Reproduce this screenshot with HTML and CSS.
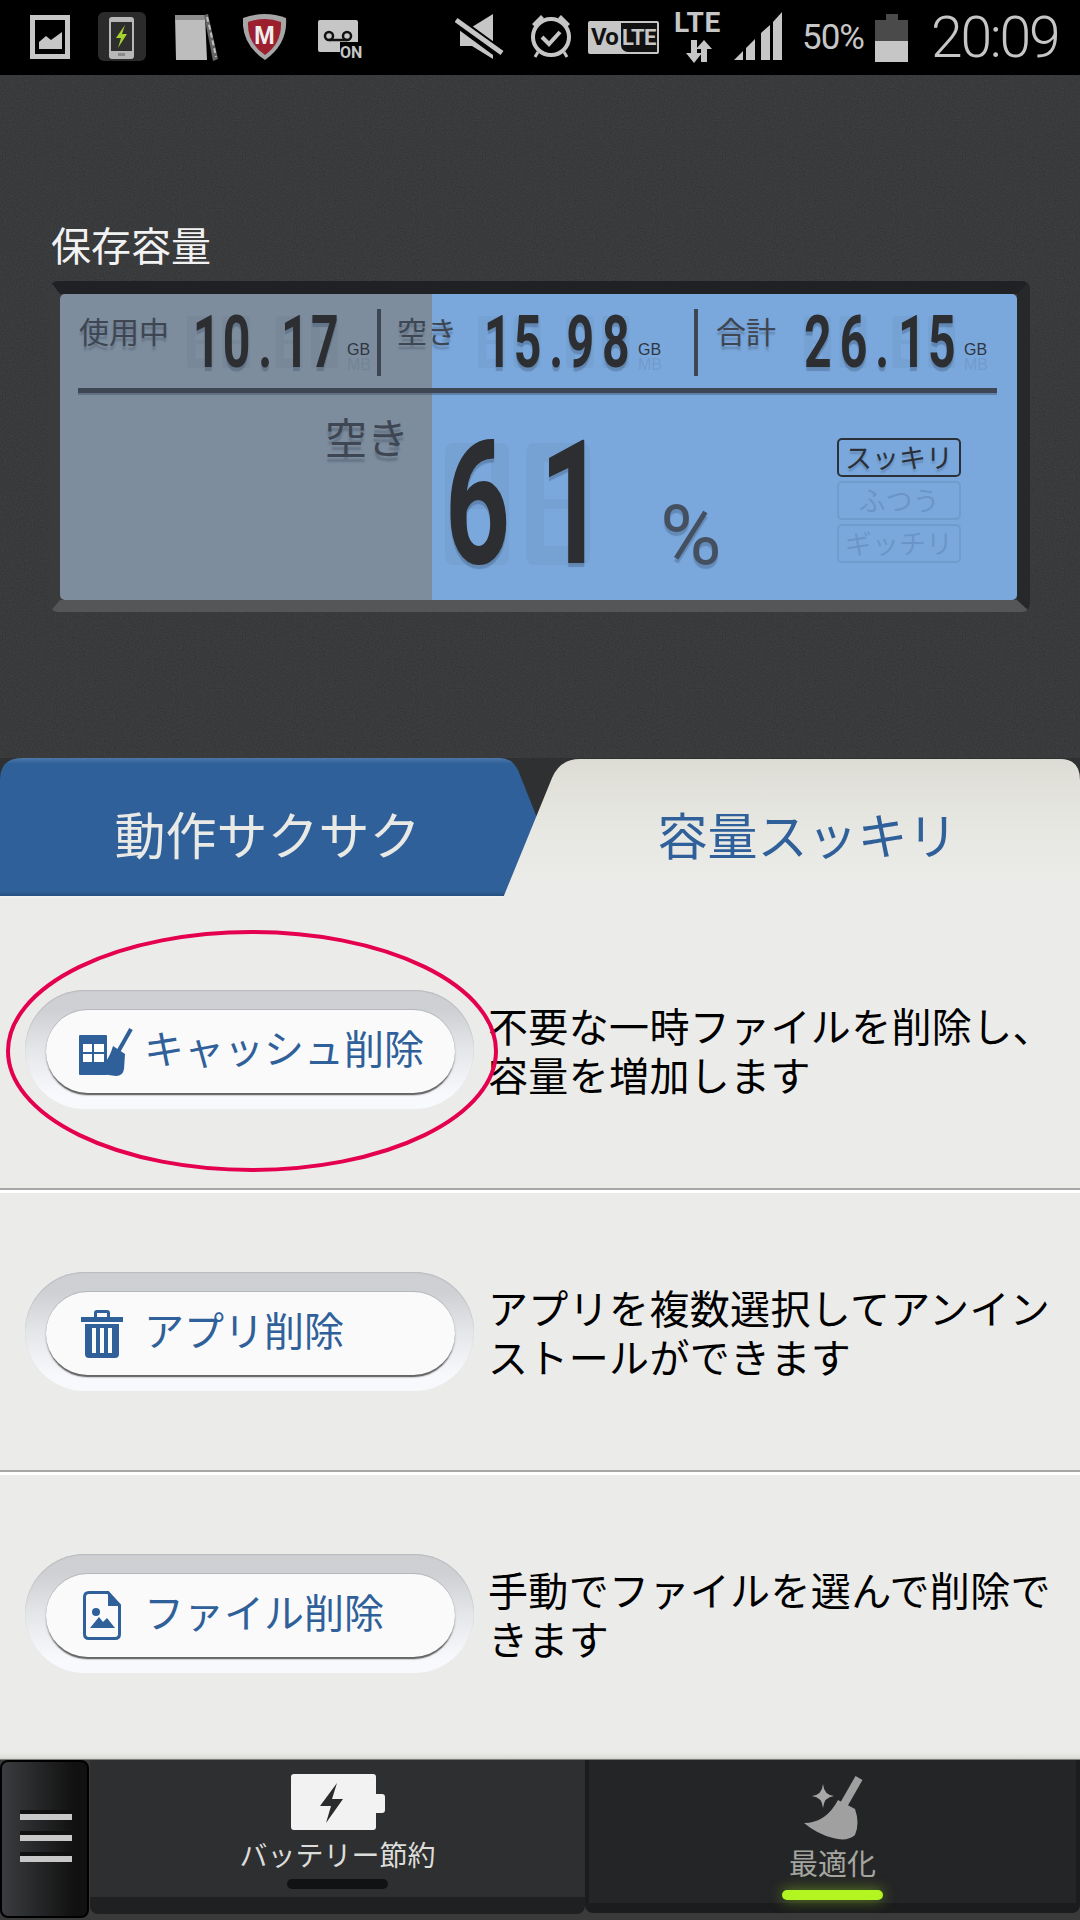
FILE: index.html
```html
<!DOCTYPE html>
<html lang="ja">
<head>
  <meta charset="UTF-8">
  <meta name="viewport" content="width=device-width, initial-scale=1.0">
  <title>容量スッキリ</title>
  <link rel="stylesheet" href="styles.css">
</head>
<body>
  <div class="status">
    <div class="status-left">
      <svg width="68" height="75" viewBox="0 0 68 75"><rect x="2.500" y="17.500" width="35" height="39" fill="none" stroke="#c6c6c6" stroke-width="5"/><path d="M9 49v-7l7-6 5 4 11-8v17z" fill="#c6c6c6"/></svg>
      <svg width="76" height="75" viewBox="0 0 76 75"><rect width="48" height="49" y="12" rx="6" fill="#2b2b2b"/><rect x="11" y="17" width="25" height="42" rx="3" fill="#b8b8b8"/><rect x="13" y="22" width="21" height="29" fill="#2e2e2e"/><path d="M27 25l-9 13h5l-3 10 9-14h-5z" fill="#a5d22c"/><rect x="20" y="53" width="7" height="3" fill="#8a8a8a"/></svg>
      <svg width="69" height="75" viewBox="0 0 69 75"><path d="M1 15h30l2 45H2z" fill="#bdbdbd"/><path d="M1 15h30v5H1z" fill="#8e8e8e"/><path d="M30 15l4-1 10 45-5 2z" fill="#666"/><path d="M33 17l3 12 3 14 3 14" stroke="#c0c0c0" stroke-width="2" fill="none" stroke-dasharray="5 3"/></svg>
      <svg width="74" height="75" viewBox="0 0 74 75"><path d="M0 18q22-8 43 0q2 26-21 42Q-2 44 0 18z" fill="#a6a6a6"/><path d="M5 22q17-6 33 0q1 21-16 33Q4 43 5 22z" fill="#9c1f2e"/><text x="21.500" y="44" class="shield-letter">M</text></svg>
      <svg width="60" height="75" viewBox="0 0 60 75"><path d="M3 20h36q2 0 2 2v20H23v10H3q-2 0-2-2V22q0-2 2-2z" fill="#c6c6c6"/><circle cx="12" cy="36" r="4" fill="none" stroke="#111" stroke-width="2.500"/><circle cx="30" cy="36" r="4" fill="none" stroke="#111" stroke-width="2.500"/><path d="M12 40h18" stroke="#111" stroke-width="2.500"/><text x="23" y="58" class="vm-on">ON</text></svg>
    </div>
    <svg width="74" height="75" viewBox="0 0 74 75"><path d="M5 27h12L38 14v45L17 46H5z" fill="#c6c6c6"/><path d="M1 21l45 33" stroke="#000" stroke-width="11"/><path d="M1 20l46 33" stroke="#c6c6c6" stroke-width="5"/></svg>
    <svg width="59" height="75" viewBox="0 0 59 75"><circle cx="22" cy="37" r="18" fill="none" stroke="#c6c6c6" stroke-width="4"/><path d="M13 37l7 7 11-12" fill="none" stroke="#c6c6c6" stroke-width="4"/><path d="M3 24l9-9 3 3-9 9zM41 24l-9-9-3 3 9 9z" fill="#c6c6c6"/><path d="M9 52l-3 5M35 52l3 5" stroke="#c6c6c6" stroke-width="3"/></svg>
    <div class="volte-slot"><div class="volte"><span class="volte-vo">Vo</span><span class="volte-lte">LTE</span></div></div>
    <div class="lte">
      <span class="lte-text">LTE</span>
      <svg width="26" height="24" viewBox="0 0 26 24"><path d="M0 13h5V0h6v13h5l-8 10zM10 9l8-9 8 9h-5v13h-6V9z" fill="#c6c6c6"/></svg>
    </div>
    <svg width="68" height="75" viewBox="0 0 68 75"><path d="M0 60l9-9v9zM12 48l9-9v21h-9zM27 33l9-8v35h-9zM39 22l9-10v48h-9z" fill="#c6c6c6"/></svg>
    <div class="battery-text">50%</div>
    <div class="battery-slot"><div class="battery-cap"></div><div class="battery-body"></div></div>
    <div class="clock">20:09</div>
  </div>

  <div class="panel">
    <div class="panel-title">保存容量</div>
    <div class="lcd-frame">
      <div class="lcd">
        <div class="stats">
          <div class="stat stat-used">
            <span class="stat-label">使用中</span>
            <span class="num"><span class="d one">1</span><span class="d">0</span><span class="dot">.</span><span class="d one">1</span><span class="d">7</span></span>
            <span class="unit"><b>GB</b><i>MB</i></span>
          </div>
          <div class="divider"></div>
          <div class="stat stat-free">
            <span class="stat-label">空き</span>
            <span class="num"><span class="d one">1</span><span class="d">5</span><span class="dot">.</span><span class="d">9</span><span class="d">8</span></span>
            <span class="unit"><b>GB</b><i>MB</i></span>
          </div>
          <div class="divider"></div>
          <div class="stat stat-total">
            <span class="stat-label">合計</span>
            <span class="num"><span class="d">2</span><span class="d">6</span><span class="dot">.</span><span class="d one">1</span><span class="d">5</span></span>
            <span class="unit"><b>GB</b><i>MB</i></span>
          </div>
        </div>
        <div class="lcd-line"></div>
        <div class="lcd-main">
          <div class="free-label">空き</div>
          <div class="big-num"><span class="d">6</span><span class="d one">1</span></div>
          <div class="percent">%</div>
          <div class="modes">
            <div class="mode mode-on">スッキリ</div>
            <div class="mode">ふつう</div>
            <div class="mode">ギッチリ</div>
          </div>
        </div>
      </div>
    </div>
  </div>

  <div class="tabs">
    <div class="tab tab-speed">動作サクサク</div>
    <div class="tab tab-clean">容量スッキリ</div>
  </div>

  <div class="list">
    <div class="row">
      <div class="pill">
        <div class="pill-inner">
          <span class="pill-icon icon-cache">
            <svg width="54" height="50" viewBox="0 0 54 50"><rect x="0" y="8" width="28" height="40" rx="1" fill="#2f6099"/><path d="M4 17h9v8H4zM15 17h10v8H15zM4 27h9v8H4zM15 27h10v8H15z" fill="#fff"/><path d="M52 2L39 25" stroke="#2f6099" stroke-width="4"/><path d="M34 19l12 8-1 15q-1 7-8 7l-15-2-8-4q14-3 20-24z" fill="#2f6099"/></svg>
          </span>
          <span class="pill-label">キャッシュ削除</span>
        </div>
      </div>
      <p class="desc">不要な一時ファイルを削除し、<br>容量を増加します</p>
    </div>
    <div class="row">
      <div class="pill">
        <div class="pill-inner">
          <span class="pill-icon">
            <svg width="42" height="48" viewBox="0 0 42 48"><path d="M0 7h13V3q0-3 3-3h10q3 0 3 3v4h13v5H0zM16 7h10V3H16z" fill="#2f6099" fill-rule="evenodd"/><path d="M4 14h34v30q0 4-4 4H8q-4 0-4-4z" fill="#2f6099"/><path d="M11 18h4v25h-4zM19 18h4v25h-4zM27 18h4v25h-4z" fill="#fafafa"/></svg>
          </span>
          <span class="pill-label">アプリ削除</span>
        </div>
      </div>
      <p class="desc">アプリを複数選択してアンイン<br>ストールができます</p>
    </div>
    <div class="row row-last">
      <div class="pill">
        <div class="pill-inner">
          <span class="pill-icon">
            <svg width="38" height="49" viewBox="0 0 38 49"><path d="M6 1.500h19L36.500 14v29q0 4.500-4.500 4.500H6q-4.500 0-4.500-4.500V6Q1.500 1.500 6 1.500z" fill="none" stroke="#2f6099" stroke-width="3"/><path d="M25 2v13h11z" fill="#2f6099"/><circle cx="13" cy="21" r="4" fill="#2f6099"/><path d="M7 37l9-11 4 5 4-4 8 10z" fill="#2f6099"/></svg>
          </span>
          <span class="pill-label">ファイル削除</span>
        </div>
      </div>
      <p class="desc">手動でファイルを選んで削除で<br>きます</p>
    </div>
    <svg class="circle-mark" width="494" height="244" viewBox="0 0 494 244"><ellipse cx="247" cy="122" rx="244" ry="119" fill="none" stroke="#e4004f" stroke-width="4"/></svg>
  </div>
  <div class="strip"></div>

  <div class="footer">
    <div class="menu">
      <span class="menu-bar"></span>
      <span class="menu-bar"></span>
      <span class="menu-bar"></span>
    </div>
    <div class="nav nav-battery">
      <svg width="96" height="58" viewBox="0 0 96 58"><path d="M4 1h79q3 0 3 3v17h6q3 0 3 3v13q0 3-3 3h-6v14q0 3-3 3H4q-3 0-3-3V4q0-3 3-3z" fill="#f2f2f2"/><path d="M47 10L30 33h11l-5 17 17-24H42z" fill="#2a2b2d"/></svg>
      <div class="nav-label">バッテリー節約</div>
      <div class="nav-mark"></div>
    </div>
    <div class="nav nav-clean">
      <svg width="60" height="66" viewBox="0 0 60 66"><path d="M20 9q1 11 11 12-10 1-11 12-1-11-11-12 10-1 11-12z" fill="#a8a8a8"/><path d="M56 3L40 31" stroke="#a0a0a0" stroke-width="8"/><path d="M35 25l17 9q5 14 0 26-8 7-22 3-16-4-29-15 22 0 34-23z" fill="#a0a0a0"/></svg>
      <div class="nav-label">最適化</div>
      <div class="nav-mark"></div>
    </div>
  </div>
</body>
</html>
```

FILE: styles.css
```css
* {
  box-sizing: border-box;
}

body {
  margin: 0;
  width: 1080px;
  height: 1920px;
  overflow: hidden;
  font-family: "Noto Sans CJK JP", sans-serif;
  background-color: #ebebe9;
}

/* status bar */
.status {
  display: flex;
  align-items: center;
  height: 75px;
  padding-left: 30px;
  background-color: #000;
  color: #c6c6c6;
}

.status svg {
  display: block;
  flex: none;
}

.status-left {
  display: flex;
  margin-right: 78px;
}

.shield-letter {
  font: 700 25px "Liberation Sans", sans-serif;
  fill: #eee;
  text-anchor: middle;
}

.vm-on {
  font: 700 16px Roboto, sans-serif;
  fill: #c6c6c6;
}

.volte-slot {
  width: 86px;
}

.volte {
  display: flex;
  width: 71px;
  height: 33px;
  border: 2px solid #c6c6c6;
  border-radius: 2px;
  background-color: #c6c6c6;
  font: 700 24px/29px Roboto, sans-serif;
}

.volte-vo {
  width: 31px;
  padding-left: 1px;
  color: #111;
  letter-spacing: -1px;
}

.volte-lte {
  flex: 1;
  background-color: #111;
  border-radius: 0 0 0 7px;
  color: #c6c6c6;
  font-size: 22px;
  text-align: center;
  letter-spacing: -.5px;
}

.lte {
  display: flex;
  flex-direction: column;
  width: 60px;
}

.lte-text {
  font: 700 28px/24px Roboto, sans-serif;
  letter-spacing: .5px;
  margin-bottom: 5px;
}

.lte svg {
  margin-left: 12px;
}

.battery-text {
  width: 73px;
  font: 400 35px/75px Roboto, sans-serif;
  letter-spacing: -1px;
}

.battery-slot {
  width: 56px;
}

.battery-cap {
  width: 12px;
  height: 6px;
  margin-left: 11px;
  background-color: #4a4a4a;
}

.battery-body {
  width: 33px;
  height: 42px;
  background: linear-gradient(#4a4a4a 0 21px, #c6c6c6 21px);
}

.clock {
  font: 300 57px/75px Roboto, sans-serif;
  letter-spacing: -2.2px;
}

/* storage panel */
.panel {
  height: 683px;
  padding-top: 149px;
  background-color: #2f3032;
  background-image: url("data:image/svg+xml,%3Csvg xmlns='http://www.w3.org/2000/svg' width='240' height='240'%3E%3Cfilter id='n'%3E%3CfeTurbulence type='fractalNoise' baseFrequency='.9' numOctaves='2'/%3E%3CfeColorMatrix values='0 0 0 0 1 0 0 0 0 1 0 0 0 0 1 0 0 0 .1 0'/%3E%3C/filter%3E%3Crect width='240' height='240' filter='url(%23n)'/%3E%3C/svg%3E");
}

.panel-title {
  margin: 0 0 17px 51px;
  font-size: 40px;
  line-height: 40px;
  color: #f2f2f2;
}

.lcd-frame {
  width: 980px;
  height: 331px;
  margin-left: 50px;
  border-style: solid;
  border-width: 13px 13px 12px 10px;
  border-color: #202124 #27282a #555657 #3a3b3d;
  border-radius: 8px;
}

.lcd {
  position: relative;
  z-index: 0;
  height: 306px;
  border-radius: 5px;
  background: linear-gradient(to right, #7d8d9e 0 372px, #7aa8dc 372px);
  color: #3e4653;
}

.stats {
  display: flex;
  height: 94px;
  padding: 15px 0 0 19px;
}

.stat {
  display: flex;
}

.stat-label {
  flex: none;
  padding-top: 5px;
  font-size: 30px;
  line-height: 32px;
  text-shadow: 0 4px 2px rgba(50, 60, 75, .3);
}

.stat-used {
  width: 298px;
}

.stat-used .stat-label {
  width: 108px;
}

.stat-free {
  width: 313px;
  padding-left: 16px;
}

.stat-free .stat-label {
  width: 81px;
}

.stat-total {
  padding-left: 18px;
}

.stat-total .stat-label {
  width: 88px;
}

/* lcd digits: cells are wider than drawn, the whole number is squeezed with scaleX */
.num,
.big-num {
  display: block;
  flex: none;
  font-family: Roboto, sans-serif;
  font-weight: 700;
  color: #2c2e31;
  white-space: nowrap;
  transform: scaleX(.66);
  transform-origin: 0 50%;
  text-shadow: 0 4px 1px rgba(50, 70, 100, .3);
}

.d,
.dot {
  position: relative;
  display: inline-block;
  vertical-align: top;
  text-align: right;
}

.d::before {
  content: "";
  position: absolute;
  top: 0;
  right: 0;
  bottom: 0;
  left: 0;
  z-index: -1;
  border: solid rgba(50, 70, 100, .07);
  background: linear-gradient(transparent 44%, rgba(50, 70, 100, .07) 44% 56%, transparent 56%) padding-box;
}

.one {
  letter-spacing: -.13em;
}

.num {
  width: 160px;
  height: 52px;
  margin-top: 7px;
  font-size: 73px;
  line-height: 52px;
}

.num .d {
  width: 41px;
  height: 52px;
  margin-right: 13px;
}

.num .d::before {
  border-width: 9px 13px;
  border-radius: 4px;
}

.num .dot {
  width: 26px;
  text-align: left;
}

.unit {
  display: flex;
  flex-direction: column;
  padding-top: 33px;
  font: 400 16px/15px "Liberation Sans", sans-serif;
}

.unit b {
  font-weight: 400;
  color: #2f3640;
}

.unit i {
  font-style: normal;
  color: rgba(50, 70, 100, .15);
}

.divider {
  flex: none;
  width: 4px;
  height: 67px;
  background-color: #3e4653;
}

.lcd-line {
  height: 5px;
  margin: 0 20px 0 18px;
  background-color: #3e4653;
  box-shadow: 0 2px 0 rgba(50, 70, 100, .4);
}

.lcd-main {
  display: flex;
  padding-left: 265px;
}

.free-label {
  width: 120px;
  margin-top: 18px;
  font-size: 42px;
  line-height: 50px;
  text-shadow: 0 5px 2px rgba(50, 60, 75, .3);
}

.big-num {
  width: 215px;
  height: 122px;
  margin-top: 50px;
  font-size: 172px;
  line-height: 122px;
}

.big-num .d {
  width: 97px;
  height: 122px;
  margin-right: 26px;
}

.big-num .d::before {
  border-width: 19px 27px;
  border-radius: 10px;
}

.percent {
  width: 177px;
  margin-top: 106px;
  font: 400 84px/74px Roboto, sans-serif;
  color: #44505f;
  text-shadow: 0 4px 1px rgba(50, 70, 100, .3);
}

.modes {
  display: flex;
  flex-direction: column;
  gap: 4px;
  margin-top: 45px;
}

.mode {
  width: 124px;
  height: 39px;
  border: 2px solid rgba(50, 70, 110, .13);
  border-radius: 5px;
  font-size: 27px;
  line-height: 34px;
  text-align: center;
  color: rgba(50, 70, 110, .2);
}

.mode-on {
  border-color: #2b3038;
  color: #2b3038;
  text-shadow: 0 3px 2px rgba(50, 70, 100, .3);
}

/* tabs */
.tabs {
  display: flex;
  height: 140px;
  background-color: #2f3032;
}

.tab {
  display: flex;
  align-items: center;
  justify-content: center;
  height: 140px;
  font-size: 51px;
  line-height: 60px;
}

.tab-speed {
  flex: none;
  width: 545px;
  padding: 10px 10px 0 0;
  color: #e9e9e5;
  background: linear-gradient(#4c78aa 0, #2f6099 6px, #2f6099 133px, #254e7e 138px, #f0f0ee 138px);
  clip-path: path("M0 140V22Q0 0 22 0H500Q512 0 518 12L545 80V140Z");
}

.tab-clean {
  flex: 1;
  margin-left: -80px;
  padding: 10px 0 0 70px;
  font-size: 50px;
  color: #2f6099;
  background: linear-gradient(#dddcd4 0, #e6e6e1 60px, #ebebe9 130px);
  clip-path: path("M0 140H38L87 20Q95 1 115 1H595Q615 1 615 22V140Z");
}

/* list */
.list {
  position: relative;
  height: 854px;
  padding-top: 13px;
  background-color: #ebebe9;
}

.row {
  display: flex;
  align-items: center;
  height: 282px;
  padding: 0 0 5px 25px;
  background: linear-gradient(to top, #fff 0 3px, #a6a6a6 3px 5px, transparent 5px);
}

.row-last {
  height: 277px;
  padding-bottom: 0;
  background: none;
}

.pill {
  flex: none;
  width: 449px;
  height: 119px;
  padding: 20px 0 0 21px;
  border-radius: 60px;
  background: linear-gradient(#cdcfd2 0, #ced0d3 20px, #e4e6e9 60px, #f7f9fc 105px);
  box-shadow: inset 0 1px 1px #b8babd;
}

.pill-inner {
  display: flex;
  align-items: center;
  width: 409px;
  height: 83px;
  border-radius: 42px;
  background-color: #fafafa;
  box-shadow: 0 3px 1px -1px #666, 0 2px 2px #999, 0 -1px 0 #b5b7ba;
}

.pill-icon {
  display: flex;
  justify-content: center;
  width: 98px;
  padding-left: 14px;
}

.icon-cache {
  padding-left: 21px;
}

.pill-label {
  font-size: 40px;
  line-height: 50px;
  color: #2f6099;
  margin-top: -9px;
}

.desc {
  margin: 0 0 0 14px;
  font-size: 40px;
  line-height: 49px;
  letter-spacing: .35px;
  color: #000;
  white-space: nowrap;
}

.circle-mark {
  position: absolute;
  left: 5px;
  top: 31px;
}

.strip {
  height: 8px;
  background: linear-gradient(#ebebe9, #dcdcd9 80%, #555 100%);
}

/* bottom nav */
.footer {
  display: flex;
  height: 160px;
  background-color: #3a3a3a;
}

.menu {
  display: flex;
  flex-direction: column;
  gap: 15px;
  flex: none;
  width: 89px;
  height: 158px;
  padding: 52px 0 0 18px;
  border: 2px solid #000;
  border-radius: 8px;
  background: linear-gradient(to right, #3a3c3f, #111 85%);
}

.menu-bar {
  width: 52px;
  height: 6px;
  background-color: #c8c8c8;
  box-shadow: 0 -4px 0 #111;
}

.nav {
  display: flex;
  flex-direction: column;
  align-items: center;
  flex: none;
  padding-top: 13px;
}

.nav svg {
  display: block;
}

.nav-battery {
  width: 495px;
  height: 154px;
  margin-left: 1px;
  background-color: #2e2f31;
  border-bottom: 17px solid #1f2021;
  border-radius: 0 0 8px 8px;
}

.nav-clean {
  width: 495px;
  height: 153px;
  background-color: #242526;
  border: solid #1b1c1d;
  border-width: 0 4px 10px 4px;
  border-radius: 0 0 8px 8px;
}

.nav-label {
  margin-top: 6px;
  font-size: 28px;
  line-height: 34px;
  color: #dcdcd8;
}

.nav-mark {
  width: 101px;
  height: 10px;
  margin-top: 8px;
  border-radius: 5px;
  background-color: #111213;
}

.nav-clean svg {
  margin-top: 2px;
}

.nav-clean .nav-label {
  margin-top: 4px;
  color: #a5a5a0;
  font-size: 29px;
}

.nav-clean .nav-mark {
  margin-top: 11px;
  background-color: #b2f520;
  box-shadow: 0 0 14px rgba(170, 240, 30, .5);
}
```
